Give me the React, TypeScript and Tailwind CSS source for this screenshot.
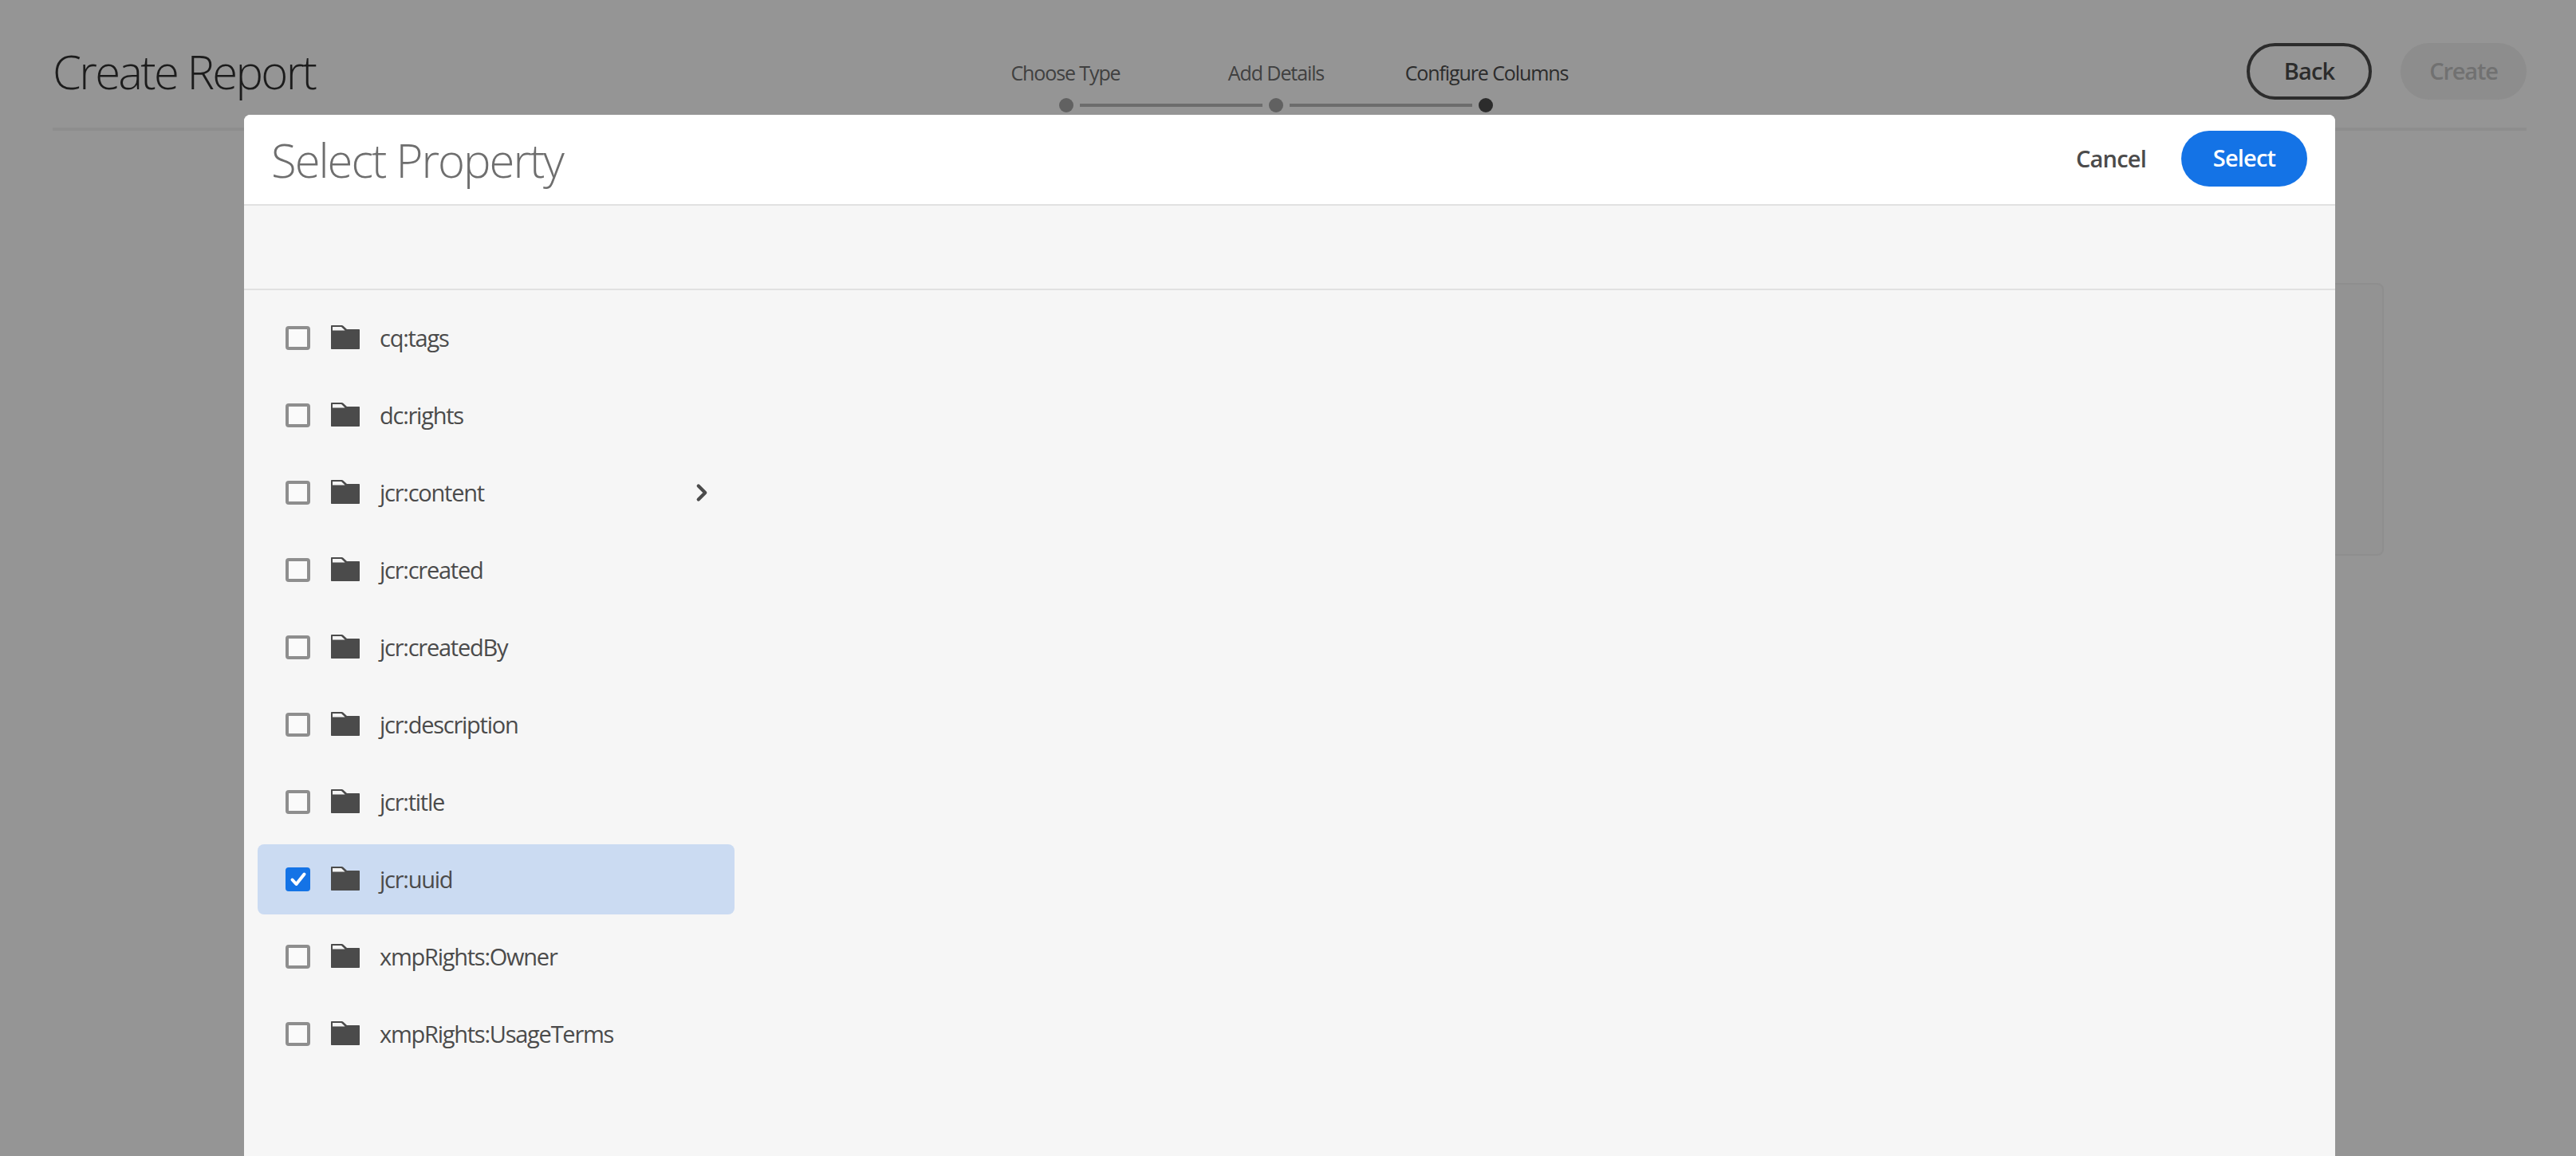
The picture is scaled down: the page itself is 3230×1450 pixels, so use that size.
import { ChevronRight } from "lucide-react";

const rows = [
  { name: "cq:tags" },
  { name: "dc:rights" },
  { name: "jcr:content", more: true },
  { name: "jcr:created" },
  { name: "jcr:createdBy" },
  { name: "jcr:description" },
  { name: "jcr:title" },
  { name: "jcr:uuid", checked: true },
  { name: "xmpRights:Owner" },
  { name: "xmpRights:UsageTerms" },
];

const steps = [
  { label: "Choose Type", dot: "bg-[#616161]", text: "text-[#404040]" },
  { label: "Add Details", dot: "bg-[#616161]", text: "text-[#404040]" },
  { label: "Configure Columns", dot: "bg-[#2c2c2c]", text: "text-[#2c2c2c]" },
];

function FolderIcon() {
  return (
    <svg width="36" height="30" viewBox="0 0 36 30" className="shrink-0">
      <path
        d="M1 0h12.5c.8 0 1.4.3 1.9.8L20 5h15c.6 0 1 .4 1 1v23c0 .6-.4 1-1 1H1c-.6 0-1-.4-1-1V1c0-.6.4-1 1-1z"
        fill="#4b4b4b"
      />
      <path d="M2 2h11l4.6 4.4H2z" fill="#f5f5f5" />
    </svg>
  );
}

function Checkbox({ checked }: { checked?: boolean }) {
  if (checked) {
    return (
      <span className="w-[31px] h-[30px] shrink-0 rounded-[4px] bg-[#1473e6] flex items-center justify-center">
        <svg width="22" height="20" viewBox="0 0 22 20">
          <path d="M3.5 10.5l5 5.5 10-12.5" fill="none" stroke="#fff" strokeWidth="4" strokeLinecap="round" strokeLinejoin="round" />
        </svg>
      </span>
    );
  }
  return <span className="w-[31px] h-[30px] shrink-0 rounded-[4px] border-[4px] border-[#8e8e8e] bg-[#fafafa]" />;
}

function PropertyRow({ name, checked, more }: { name: string; checked?: boolean; more?: boolean }) {
  return (
    <div className={`h-[88px] mb-[9px] w-[598px] rounded-[8px] pl-[35px] pr-[24px] flex items-center ${checked ? "bg-[#cbdbf2]" : ""}`}>
      <Checkbox checked={checked} />
      <span className="ml-[26px] -mt-[3px]">
        <FolderIcon />
      </span>
      <span className="ml-[25px] flex-1 text-[29px] tracking-[-1.25px] text-[#4b4b4b]">{name}</span>
      {more && <ChevronRight size={34} strokeWidth={3} className="text-[#4b4b4b]" />}
    </div>
  );
}

export default function App() {
  return (
    <div className="relative h-[1450px] w-[3230px] overflow-hidden bg-[#959595] font-['Open_Sans',sans-serif]">
      <header className="ml-[66px] mr-[62px] h-[164px] border-b-[4px] border-[#8d8d8d] flex items-start pt-[52px]">
        <h1 className="w-[1138px] text-[58px] leading-[76px] font-light tracking-[-2.7px] text-[#1c1c1c]">Create Report</h1>
        <div className="flex flex-col items-center mt-[21px]">
          <div className="flex w-[792px]">
            {steps.map((s) => (
              <span key={s.label} className={`w-[264px] text-center text-[25px] leading-[36px] tracking-[-1.1px] ${s.text}`}>
                {s.label}
              </span>
            ))}
          </div>
          <div className="flex items-center mt-[14px]">
            <span className={`w-[18px] h-[18px] rounded-full ${steps[0].dot}`} />
            <span className="w-[229px] h-[4px] mx-[8px] bg-[#6c6c6c]" />
            <span className={`w-[18px] h-[18px] rounded-full ${steps[1].dot}`} />
            <span className="w-[229px] h-[4px] mx-[8px] bg-[#6c6c6c]" />
            <span className={`w-[18px] h-[18px] rounded-full ${steps[2].dot}`} />
          </div>
        </div>
        <div className="ml-auto mt-[2px] flex gap-[36px]">
          <button className="w-[157px] h-[71px] pb-[2px] rounded-full border-[4px] border-[#2c2c2c] text-[29px] font-semibold tracking-[-0.8px] text-[#2c2c2c]">Back</button>
          <button className="w-[158px] h-[71px] pb-[2px] rounded-full bg-[#8d8d8d] text-[29px] font-semibold tracking-[-1.2px] text-[#717171]">Create</button>
        </div>
      </header>

      {/* card sitting behind the dialog */}
      <div className="mt-[191px] ml-[800px] w-[2189px] h-[342px] rounded-[8px] border-[2px] border-[#8e8e8e] bg-[#939393]" />

      <div className="absolute left-[306px] top-[144px] bottom-0 w-[2622px] rounded-t-[8px] bg-[#f6f6f6] flex flex-col overflow-hidden">
        <div className="h-[114px] shrink-0 bg-white border-b-[2px] border-[#e1e1e1] flex items-center justify-between pl-[34px] pr-[35px]">
          <h2 className="text-[58px] font-light tracking-[-2px] text-[#6e6e6e]">Select Property</h2>
          <div className="flex items-center gap-[44px] -mt-[2px]">
            <span className="text-[29px] font-semibold tracking-[-0.8px] text-[#4b4b4b]">Cancel</span>
            <button className="w-[158px] h-[70px] pb-[2px] rounded-full bg-[#1473e6] text-[29px] font-semibold tracking-[-0.8px] text-white">Select</button>
          </div>
        </div>
        <div className="h-[106px] shrink-0 border-b-[2px] border-[#e1e1e1]" />
        <div className="pt-[16px] pl-[17px]">
          {rows.map((r) => (
            <PropertyRow key={r.name} {...r} />
          ))}
        </div>
      </div>
    </div>
  );
}
